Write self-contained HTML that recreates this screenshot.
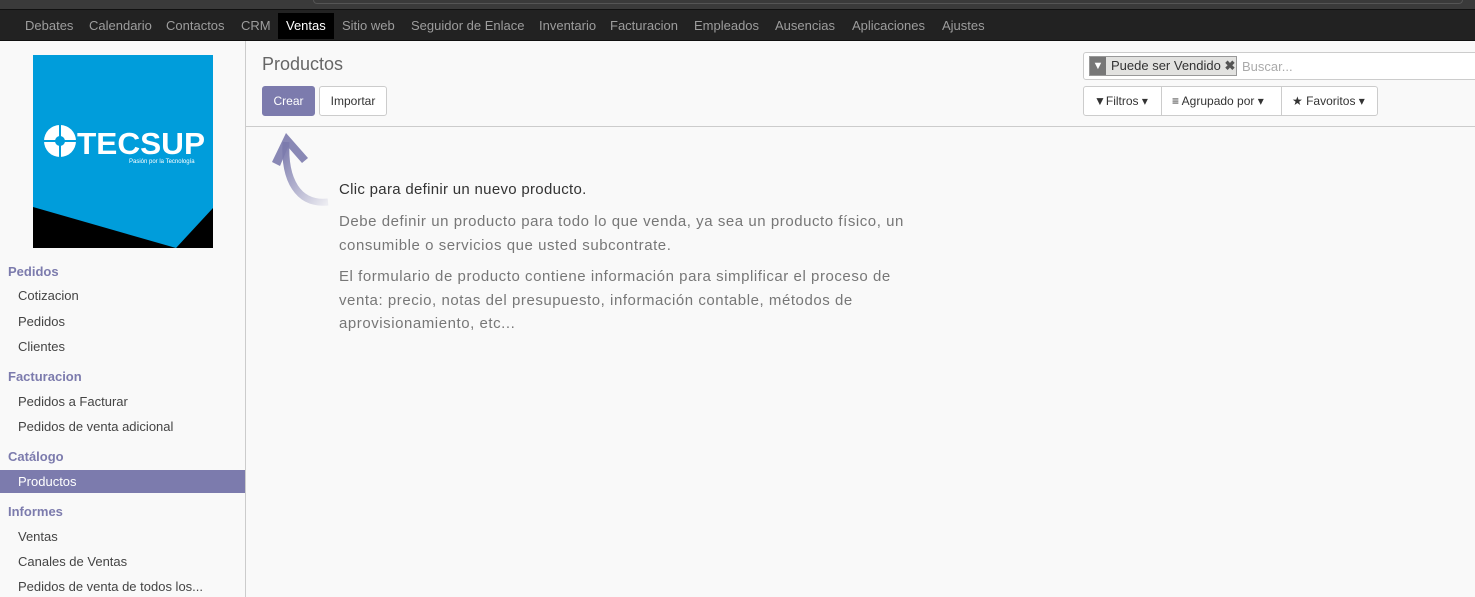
<!DOCTYPE html>
<html><head><meta charset="utf-8"><style>
*{box-sizing:border-box;margin:0;padding:0}
body{width:1475px;height:597px;overflow:hidden;background:#f9f9f9;font-family:"Liberation Sans",sans-serif;font-size:13px;color:#4c4c4c;position:relative}
.top{position:absolute;left:0;top:0;width:1475px;height:9px;background:#3a3a3a}
.nav{position:absolute;left:0;top:9px;width:1475px;height:32px;background:#222;border-top:1px solid #111;border-bottom:1px solid #111}
.nav span{position:absolute;top:1px;height:30px;line-height:30px;color:#9d9d9d;font-size:13px}
.nav span.act{background:#000;color:#fff;padding:0 8px;top:3px;height:26px;line-height:26px}
.side{position:absolute;left:0;top:41px;width:246px;height:556px;border-right:1px solid #ccc;background:#f9f9f9}
.h{position:absolute;left:8px;font-weight:bold;color:#7c7bad;font-size:13px}
.i{position:absolute;left:18px;color:#444;font-size:13px}
.actv{position:absolute;left:0;width:245px;height:23px;background:#7c7bad;color:#fff;padding-left:18px;line-height:23px}
.cp{position:absolute;left:246px;top:41px;width:1229px;height:86px;border-bottom:1px solid #ccc}
.btn{position:absolute;height:30px;line-height:28px;border:1px solid #ccc;border-radius:3px;font-size:12px;text-align:center;background:#fff;color:#333}
.p{position:absolute;left:339px;width:580px;font-size:15px;line-height:23.5px;color:#777;letter-spacing:0.55px}
</style></head><body>
<div class="top"><div style="position:absolute;left:313px;top:0;width:1150px;height:4px;border:1px solid #555;border-top:none;border-radius:0 0 4px 4px"></div></div>
<div class="nav">
<span style="left:25px">Debates</span><span style="left:89px">Calendario</span><span style="left:166px">Contactos</span><span style="left:241px">CRM</span><span class="act" style="left:278px">Ventas</span><span style="left:342px">Sitio web</span><span style="left:411px">Seguidor de Enlace</span><span style="left:539px">Inventario</span><span style="left:610px">Facturacion</span><span style="left:694px">Empleados</span><span style="left:775px">Ausencias</span><span style="left:852px">Aplicaciones</span><span style="left:942px">Ajustes</span>
</div>
<div class="side">
<svg style="position:absolute;left:33px;top:14px" width="180" height="193" viewBox="0 0 180 193">
<rect width="180" height="193" fill="#000"/>
<polygon points="0,0 180,0 180,153 143,193 0,152" fill="#009ddb"/>
<circle cx="27" cy="86" r="16" fill="#fff"/>
<circle cx="27" cy="86" r="5" fill="#009ddb"/>
<path d="M27 70 L27 102 M11 86 L43 86" stroke="#009ddb" stroke-width="2"/>
<text x="44" y="99" fill="#fff" font-family="Liberation Sans" font-weight="bold" font-size="31" textLength="128" lengthAdjust="spacingAndGlyphs">TECSUP</text>
<text x="96" y="108" fill="#fff" font-family="Liberation Sans" font-size="6">Pasión por la Tecnología</text>
</svg>
<div class="h" style="top:223px">Pedidos</div>
<div class="i" style="top:247px">Cotizacion</div>
<div class="i" style="top:273px">Pedidos</div>
<div class="i" style="top:298px">Clientes</div>
<div class="h" style="top:328px">Facturacion</div>
<div class="i" style="top:353px">Pedidos a Facturar</div>
<div class="i" style="top:378px">Pedidos de venta adicional</div>
<div class="h" style="top:408px">Catálogo</div>
<div class="actv" style="top:429px">Productos</div>
<div class="h" style="top:463px">Informes</div>
<div class="i" style="top:488px">Ventas</div>
<div class="i" style="top:513px">Canales de Ventas</div>
<div class="i" style="top:538px">Pedidos de venta de todos los...</div>
</div>
<div class="cp">
<div style="position:absolute;left:16px;top:13px;font-size:18px;color:#666">Productos</div>
<div class="btn" style="left:16px;top:45px;width:53px;background:#7c7bad;border-color:#7c7bad;color:#fff">Crear</div>
<div class="btn" style="left:73px;top:45px;width:68px">Importar</div>
<div style="position:absolute;left:837px;top:11px;width:400px;height:28px;border:1px solid #ccc;border-radius:3px;background:#fff">
<div style="position:absolute;left:5px;top:3px;height:20px;width:148px;background:#e2e2e0;border:1px solid #999">
<div style="position:absolute;left:0;top:0;width:16px;height:18px;background:#777;color:#fff;font-size:11px;text-align:center;line-height:18px">▼</div>
<span style="position:absolute;left:21px;top:1px;font-size:13px;color:#333">Puede ser Vendido <b style="color:#555">✖</b></span></div>
<span style="position:absolute;left:158px;top:6px;color:#aaa;font-size:13px">Buscar...</span>
</div>
<div style="position:absolute;left:837px;top:45px;width:295px;height:30px;border:1px solid #ccc;border-radius:3px;background:#fff;font-size:12px;color:#333">
<span style="position:absolute;left:10px;top:7px">▼Filtros ▾</span>
<div style="position:absolute;left:77px;top:0;width:1px;height:28px;background:#ccc"></div>
<span style="position:absolute;left:88px;top:7px">≡ Agrupado por ▾</span>
<div style="position:absolute;left:197px;top:0;width:1px;height:28px;background:#ccc"></div>
<span style="position:absolute;left:208px;top:7px">★ Favoritos ▾</span>
</div>
</div>
<svg style="position:absolute;left:268px;top:130px" width="70" height="80" viewBox="0 0 70 80">
<defs><linearGradient id="g" x1="0" y1="0" x2="1" y2="1"><stop offset="0" stop-color="#7c7bad"/><stop offset="1" stop-color="#7c7bad" stop-opacity="0.1"/></linearGradient></defs>
<path d="M60 72 C30 75 16 50 18 12" stroke="url(#g)" stroke-width="7" fill="none"/>
<path d="M4 32 L18 3 L40 28 L34 33 L20 17 L12 36Z" fill="#7c7bad" opacity="0.9"/>
</svg>
<div style="position:absolute;left:339px;top:181px;font-size:15px;color:#333;letter-spacing:0.3px">Clic para definir un nuevo producto.</div>
<div class="p" style="top:210px">Debe definir un producto para todo lo que venda, ya sea un producto físico, un consumible o servicios que usted subcontrate.</div>
<div class="p" style="top:265px">El formulario de producto contiene información para simplificar el proceso de venta: precio, notas del presupuesto, información contable, métodos de aprovisionamiento, etc...</div>
</body></html>
